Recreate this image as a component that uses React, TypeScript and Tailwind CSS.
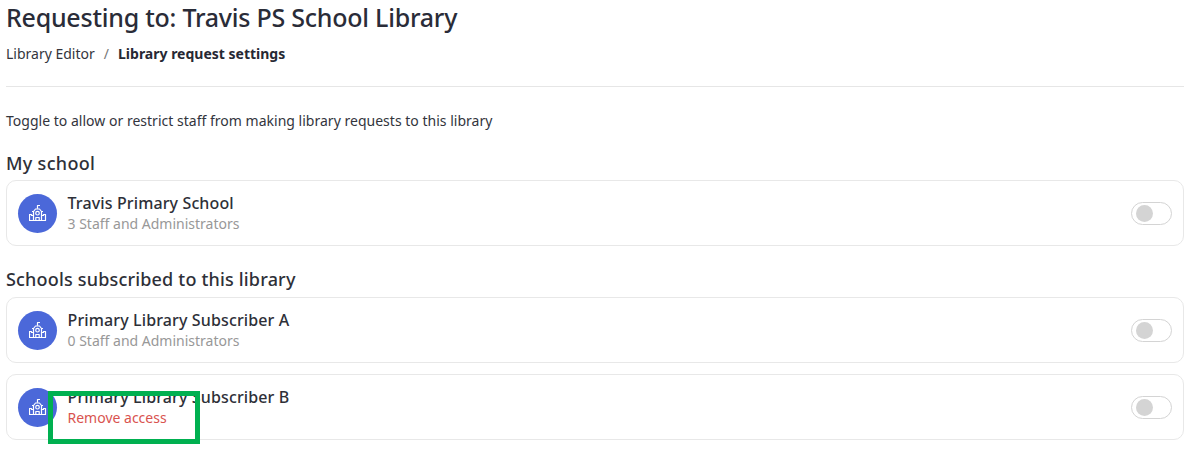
import { useState } from 'react'
import clsx from 'clsx'

interface School {
  id: string
  name: string
  staff?: number
}

const mySchool: School = { id: 'travis', name: 'Travis Primary School', staff: 3 }

const subscribers: School[] = [
  { id: 'sub-a', name: 'Primary Library Subscriber A', staff: 0 },
  { id: 'sub-b', name: 'Primary Library Subscriber B' },
]

function SchoolIcon() {
  return (
    <svg
      viewBox="0 0 18 18"
      className="h-[18px] w-[18px]"
      fill="none"
      stroke="currentColor"
      strokeWidth="1.2"
      strokeLinejoin="round"
      aria-hidden="true"
    >
      <path d="M8.500 4.800V1.500H11" />
      <path d="M3 7.500h1.500L6.500 5h4l2 2.500H14" />
      <path d="M4.500 7.500V16.500M12.500 7.500V16.500" />
      <path d="M4.500 11.500H2.500V10.500H.5v6h16v-6h-2v1h-2" />
      <circle cx="8.500" cy="9.200" r="1.800" />
      <path d="M6.800 16.500v-3h3.400v3" />
    </svg>
  )
}

function Toggle({ label }: { label: string }) {
  const [on, setOn] = useState(false)

  return (
    <button
      type="button"
      role="switch"
      aria-checked={on}
      aria-label={label}
      onClick={() => setOn((prev) => !prev)}
      className={clsx(
        'flex h-[23px] w-[41px] items-center rounded-full border border-[#d4d4d4] px-[4px]',
        on ? 'justify-end bg-[#4b68d9]' : 'justify-start bg-white',
      )}
    >
      <span className="h-[17px] w-[17px] rounded-full bg-[#d4d4d4]" />
    </button>
  )
}

function SchoolCard({ school }: { school: School }) {
  return (
    <article className="relative flex h-[66px] items-center rounded-[10px] border border-[#e8e8e8] px-[11px]">
      <div className="flex h-[39px] w-[39px] items-center justify-center rounded-full bg-[#4b68d9] text-white">
        <SchoolIcon />
      </div>
      <div className="ml-[10.5px] flex-1 whitespace-nowrap">
        <h3 className="pt-px text-[16px] leading-[21px] font-medium tracking-[0.13px] text-[#2e3038]">{school.name}</h3>
        {school.staff === undefined ? (
          <button type="button" className="block text-[14px] leading-[20px] text-[#d9534f]">
            Remove access
          </button>
        ) : (
          <p className="text-[14px] leading-[20px] text-[#989898]">{school.staff} Staff and Administrators</p>
        )}
      </div>
      <Toggle label={`Allow requests from ${school.name}`} />
      {school.staff === undefined ? (
        <span className="pointer-events-none absolute top-[16px] left-[41px] h-[53px] w-[152px] border-[5px] border-[#00b050]" />
      ) : null}
    </article>
  )
}

export default function App() {
  return (
    <main className="h-[455px] overflow-hidden bg-white pr-[10px] pl-[6px] font-['Noto_Sans','Open_Sans',sans-serif] text-[#33353d]">
      <header className="border-b border-[#e6e6e6] pb-[22px]">
        <h1 className="h-[33px] text-[25px] leading-[34px] font-medium tracking-[-0.24px] whitespace-nowrap text-[#2a2c38]">
          Requesting to: Travis PS School Library
        </h1>
        <nav className="mt-[10px] flex h-[21px] items-center text-[14px] leading-[21px] whitespace-nowrap">
          <a>Library Editor</a>
          <span className="mx-[9px] text-[#777]">/</span>
          <span className="font-bold text-[#262833]">Library request settings</span>
        </nav>
      </header>

      <p className="mt-[23px] text-[14px] leading-[21px] tracking-[0.015px] whitespace-nowrap">
        Toggle to allow or restrict staff from making library requests to this library
      </p>

      <section className="mt-[20px]">
        <h2 className="mb-[4px] text-[18px] leading-[25px] font-medium tracking-[0.3px] text-[#2e3038]">My school</h2>
        <SchoolCard school={mySchool} />
      </section>

      <section className="mt-[21px]">
        <h2 className="mb-[5px] text-[18px] leading-[25px] font-medium tracking-[0.18px] text-[#2e3038]">
          Schools subscribed to this library
        </h2>
        <div className="space-y-[11px]">
          {subscribers.map((school) => (
            <SchoolCard key={school.id} school={school} />
          ))}
        </div>
      </section>
    </main>
  )
}
